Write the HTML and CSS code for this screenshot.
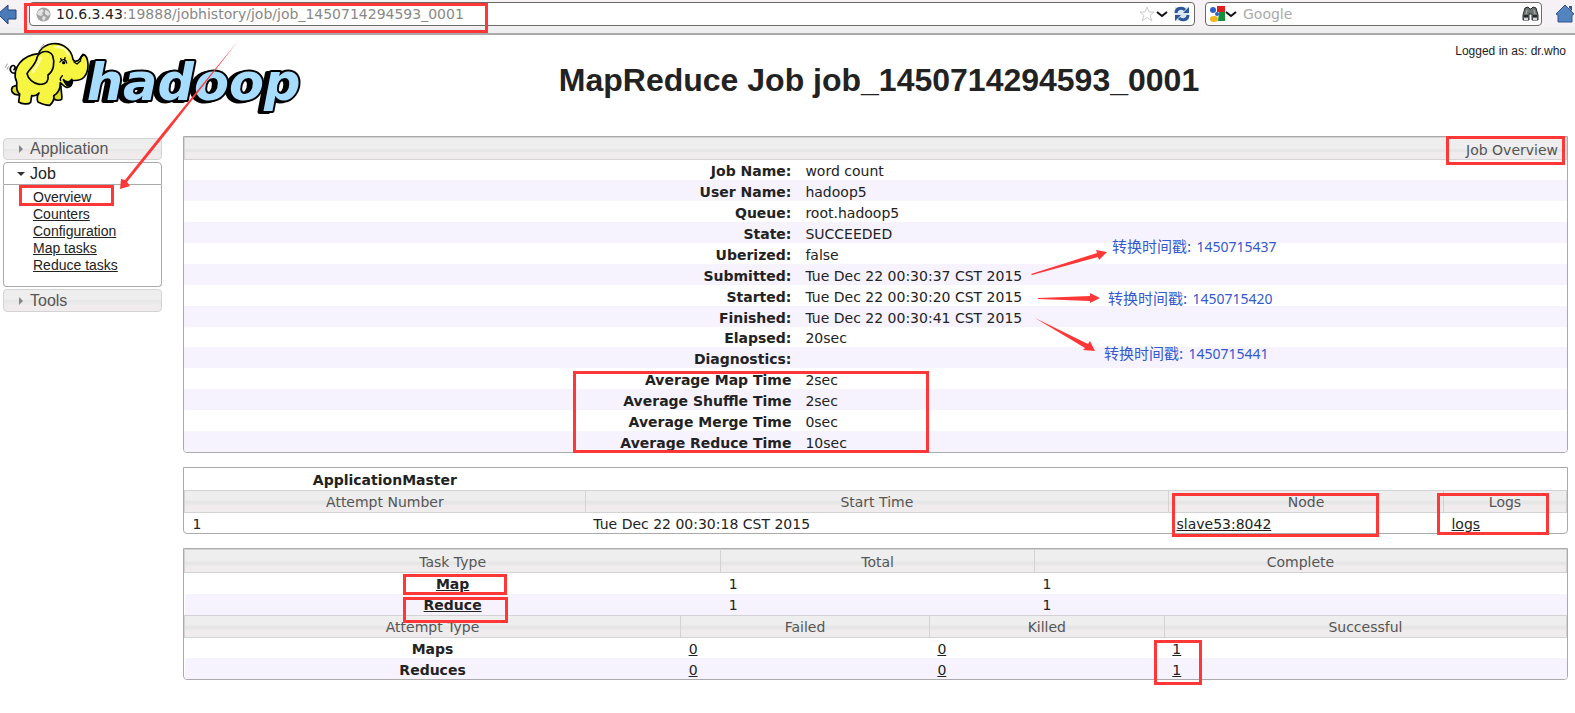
FILE: index.html
```html
<!DOCTYPE html>
<html lang="en">
<head>
  <meta charset="UTF-8">
  <meta name="viewport" content="width=device-width, initial-scale=1.0">
  <title>MapReduce Job job_1450714294593_0001</title>
  <link rel="stylesheet" href="styles.css">
</head>
<body>
  <div class="toolbar">
    <button class="tool back" aria-label="Back">
      <svg width="17" height="22" viewBox="0 0 17 22"><path d="M-2 11 L8 2 V7 H16 V16 H8 V21 Z" fill="#4a7ab8" stroke="#1f4478"/></svg>
    </button>
    <div class="field url">
      <svg width="15" height="15" viewBox="0 0 15 15"><circle cx="7.500" cy="7.500" r="7" fill="#a3a3a3"/><path d="M2 4 L6 2 L8 4 L6 6 L7 8 L4 9 L1 7 Z M9 3 L12 4 L14 7 L12 9 L9 7 Z M7 9 L10 10 L8 14 L6 12 Z" fill="#e3e3e3"/></svg>
      <label class="domain" for="url">10.6.3.43</label>
      <input id="url" type="text" value=":19888/jobhistory/job/job_1450714294593_0001">
      <button class="tool" aria-label="Bookmark">
        <svg width="16" height="16" viewBox="0 0 16 16"><path d="M8 1 L10 6 L15 6 L11 9.500 L13 15 L8 11.500 L3 15 L5 9.500 L1 6 L6 6 Z" fill="#fff" stroke="#ccc"/></svg>
      </button>
      <button class="tool history" aria-label="History">
        <svg width="12" height="8" viewBox="0 0 12 8"><path d="M1 2 L6 6 L11 2" fill="none" stroke="#111" stroke-width="2"/></svg>
      </button>
      <button class="tool reload" aria-label="Reload">
        <svg width="16" height="16" viewBox="0 0 16 16"><rect x="1" y="1" width="14" height="14" fill="#dbe6f4"/><path d="M2 7 C2 2 8 1 11 4 M14 9 C14 14 8 15 5 12" fill="none" stroke="#2c5698" stroke-width="3"/><path d="M15 1 V7 H9 Z M1 15 V9 H7 Z" fill="#2c5698"/></svg>
      </button>
    </div>
    <div class="field search">
      <svg width="16" height="16" viewBox="0 0 16 16"><path d="M8 0 H16 V6 H8 Z" fill="#e01f1f"/><path d="M10 6 H16 V15 H9 Z" fill="#16913a"/><circle cx="4" cy="4" r="3" fill="#2c62c8"/><circle cx="8" cy="8" r="2" fill="#2c62c8"/><ellipse cx="5" cy="13" rx="4" ry="3" fill="#f6b31b"/></svg>
      <button class="tool" aria-label="Search engine">
        <svg width="12" height="8" viewBox="0 0 12 8"><path d="M1 2 L6 6 L11 2" fill="none" stroke="#111" stroke-width="2"/></svg>
      </button>
      <input type="text" placeholder="Google" aria-label="Search">
      <button class="tool" aria-label="Find">
        <svg width="17" height="16" viewBox="0 0 17 16"><path d="M3 2 L6 1 L8 3 H9 L11 1 L14 2 L16 9 V14 H10 V8 H7 V14 H1 V9 Z" fill="#6d7573" stroke="#252b2a"/><path d="M2 10 H6 M11 10 H15" stroke="#252b2a" stroke-width="2"/><path d="M2 13 H6 M11 13 H15" stroke="#d5dad8" stroke-width="2"/><path d="M5 4 L4 8 M12 4 L13 8" stroke="#b5bbb9"/></svg>
      </button>
    </div>
    <button class="tool home" aria-label="Home">
      <svg width="20" height="20" viewBox="0 0 20 20"><path d="M1 10 L10 1 L19 10 L17 11 V18 H3 V11 Z" fill="#5484c0" stroke="#2b5590"/><path d="M14 2 H17 V7 L14 4 Z" fill="#2b5590"/></svg>
    </button>
  </div>

  <header class="header">
    <svg class="logo" width="310" height="80" viewBox="0 0 930 240" role="img" aria-label="hadoop">
      <text class="wordmark" x="260" y="187">hadoop</text>
      <!-- elephant -->
      <g fill="#f6f642" stroke="#000" stroke-width="5" stroke-linejoin="round" stroke-linecap="round">
        <path d="M50 104 C34 110 26 96 34 85 C42 78 50 88 42 95" fill="none"/>
        <path d="M164 150 L183 144 C182 160 188 174 185 184 C178 189 166 187 160 181 Z" fill="#dede20"/>
        <path d="M50 142 L38 146 C30 158 38 170 55 171 L66 168 Z" fill="#dede20"/>
        <path d="M120 38 C138 15 174 9 198 28 C212 38 217 52 219 64 C223 74 236 70 241 60 L249 49 C258 51 263 60 264 79 C265 112 248 131 217 127 C219 139 211 150 200 148 C190 146 187 137 181 134 C181 150 176 165 161 173 C164 185 156 196 149 202 C138 202 126 198 114 192 C109 180 112 172 117 165 C108 174 99 174 95 173 L92 193 C85 201 65 198 56 192 L59 168 C45 159 52 143 50 131 C40 111 47 89 59 75 C76 55 94 49 116 47 Z"/>
        <path d="M158 53 C147 34 122 38 112 56 C107 82 90 90 81 107 C84 122 100 137 118 139 C142 139 146 127 144 111 C160 100 166 75 158 53 Z"/>
        <path d="M190 125 C202 136 211 131 215 124 C215 138 211 145 203 143 C196 140 194 132 190 125 Z" fill="#000"/>
        <path d="M180 72 C188 60 199 65 200 75 M186 68 L182 62 M194 65 L195 59 M187 113 C181 119 179 124 182 128 M222 72 L231 78 L242 68 M252 50 C244 55 241 57 242 64" fill="none" stroke-width="4"/>
        <circle cx="191" cy="74" r="5" fill="#000" stroke="none"/>
        <path d="M16 88 L22 78 M22 93 L25 86 M122 30 L132 18 M127 33 L134 26" fill="none" stroke="#666" stroke-width="2"/>
        <path d="M166 28 C184 24 198 34 204 49 M122 60 C116 77 106 92 99 102" fill="none" stroke="#ffffb0" stroke-width="7"/>
      </g>
    </svg>
    <h1>MapReduce Job job_1450714294593_0001</h1>
    <div class="user">Logged in as: dr.who</div>
  </header>

  <div class="layout">
    <nav class="sidebar">
      <button class="nav-title">Application</button>
      <button class="nav-title open">Job</button>
      <ul class="nav-links">
        <li><a href="#">Overview</a></li>
        <li><a href="#">Counters</a></li>
        <li><a href="#">Configuration</a></li>
        <li><a href="#">Map tasks</a></li>
        <li><a href="#">Reduce tasks</a></li>
      </ul>
      <button class="nav-title">Tools</button>
    </nav>

    <main class="content">
      <section class="box info">
        <div class="bar">Job Overview</div>
        <table>
          <tr><th>Job Name:</th><td>word count</td></tr>
          <tr><th>User Name:</th><td>hadoop5</td></tr>
          <tr><th>Queue:</th><td>root.hadoop5</td></tr>
          <tr><th>State:</th><td>SUCCEEDED</td></tr>
          <tr><th>Uberized:</th><td>false</td></tr>
          <tr><th>Submitted:</th><td>Tue Dec 22 00:30:37 CST 2015</td></tr>
          <tr><th>Started:</th><td>Tue Dec 22 00:30:20 CST 2015</td></tr>
          <tr><th>Finished:</th><td>Tue Dec 22 00:30:41 CST 2015</td></tr>
          <tr><th>Elapsed:</th><td>20sec</td></tr>
          <tr><th>Diagnostics:</th><td></td></tr>
          <tr><th>Average Map Time</th><td>2sec</td></tr>
          <tr><th>Average Shuffle Time</th><td>2sec</td></tr>
          <tr><th>Average Merge Time</th><td>0sec</td></tr>
          <tr><th>Average Reduce Time</th><td>10sec</td></tr>
        </table>
      </section>

      <section class="box master">
        <table>
          <colgroup><col class="c-attempt"><col class="c-start"><col class="c-node"><col></colgroup>
          <tr><th>ApplicationMaster</th><td colspan="3"></td></tr>
          <tr class="head"><th>Attempt Number</th><th>Start Time</th><th>Node</th><th>Logs</th></tr>
          <tr><td>1</td><td>Tue Dec 22 00:30:18 CST 2015</td><td><a href="#">slave53:8042</a></td><td><a href="#">logs</a></td></tr>
        </table>
      </section>

      <section class="box tasks">
        <table>
          <colgroup><col class="c-task"><col class="c-total"><col></colgroup>
          <tr class="head"><th>Task Type</th><th>Total</th><th>Complete</th></tr>
          <tr><th><a href="#">Map</a></th><td>1</td><td>1</td></tr>
          <tr class="even"><th><a href="#">Reduce</a></th><td>1</td><td>1</td></tr>
        </table>
        <table>
          <colgroup><col class="c-type"><col class="c-failed"><col class="c-killed"><col></colgroup>
          <tr class="head"><th>Attempt Type</th><th>Failed</th><th>Killed</th><th>Successful</th></tr>
          <tr><th>Maps</th><td><a href="#">0</a></td><td><a href="#">0</a></td><td><a href="#">1</a></td></tr>
          <tr class="even"><th>Reduces</th><td><a href="#">0</a></td><td><a href="#">0</a></td><td><a href="#">1</a></td></tr>
        </table>
      </section>
    </main>
  </div>

  <!-- red marks and notes drawn over the page -->
  <svg class="marks" width="1575" height="713" viewBox="0 0 1575 713" aria-hidden="true">
    <g fill="none" stroke="#ff3737" stroke-width="3">
      <rect x="25.500" y="4.500" width="461" height="27"/>
      <rect x="20.500" y="186.500" width="92" height="18"/>
      <rect x="1447.500" y="137.500" width="116" height="26"/>
      <rect x="574.500" y="372.500" width="353" height="79"/>
      <rect x="1173.500" y="494.500" width="204" height="41"/>
      <rect x="1438.500" y="494.500" width="109" height="39"/>
      <rect x="404.500" y="575.500" width="101" height="18"/>
      <rect x="404.500" y="598.500" width="102" height="23"/>
      <rect x="1155.500" y="641.500" width="45" height="42"/>
    </g>
    <g fill="#ff3737">
      <path d="M238 41 L168 131 L127 182 L130 186 L120 189 L121 179 L125 180 L165 130 Z"/>
      <path d="M1031 274 L1097 253 L1096 250 L1107 252 L1099 260 L1098 257 L1032 275 Z"/>
      <path d="M1038 298 L1090 296 V293 L1100 298 L1090 303 V301 L1038 299 Z"/>
      <path d="M1035 318 L1088 344 L1090 341 L1095 351 L1083 350 L1085 348 Z"/>
    </g>
  </svg>
  <div class="note note-submitted">转换时间戳: <span>1450715437</span></div>
  <div class="note note-started">转换时间戳: <span>1450715420</span></div>
  <div class="note note-finished">转换时间戳: <span>1450715441</span></div>
</body>
</html>
```
FILE: styles.css
```css
body {
  margin: 0;
  position: relative;
  background: #fff;
  color: #222;
  font-family: "DejaVu Sans", Verdana, sans-serif;
  font-size: 14px;
  overflow-x: hidden;
}

a {
  color: #222;
}

button,
input {
  font-family: inherit;
  font-size: inherit;
}

/* browser toolbar */
.toolbar {
  display: flex;
  box-sizing: border-box;
  height: 35px;
  padding-top: 2px;
  background: linear-gradient(#f6f1f5 26px, #efefef 28px);
  border-bottom: 2px solid #a9a9a9;
}

.tool {
  display: flex;
  align-items: center;
  padding: 0;
  border: 0;
  background: none;
  cursor: pointer;
}

.back {
  width: 29px;
  height: 24px;
}

.field {
  display: flex;
  align-items: center;
  box-sizing: border-box;
  height: 24px;
  border: 1px solid #6b6b66;
  border-radius: 4px;
  background: #fff;
}

.field input {
  flex: 1;
  min-width: 0;
  padding: 0;
  border: 0;
  outline: 0;
  color: #888;
  background: none;
}

.field input::placeholder {
  color: #aaa;
}

.url {
  flex: 1;
  padding: 0 4px 0 6px;
}

.domain {
  padding-left: 5px;
}

.history {
  margin-left: 1px;
}

.reload {
  margin-left: 6px;
}

.search {
  width: 337px;
  margin-left: 10px;
  padding: 0 2px 0 3px;
}

.search input {
  padding-left: 6px;
}

.home {
  height: 24px;
  margin-left: 13px;
}

/* page header */
.header {
  display: grid;
  grid-template-columns: 183px 1fr;
  height: 101px;
  font-family: "Liberation Sans", Arial, sans-serif;
}

.logo {
  grid-area: 1 / 1;
  margin-top: 3px;
}

.wordmark {
  fill: #a5dcff;
  stroke: #000;
  stroke-width: 12px;
  stroke-linejoin: round;
  paint-order: stroke;
  font: italic bold 153px "DejaVu Sans", Verdana, sans-serif;
  filter: drop-shadow(-12px 3px 0 #000);
}

h1 {
  grid-area: 1 / 2;
  margin: 26px 0 0;
  font-size: 32px;
  line-height: 38px;
  text-align: center;
}

.user {
  grid-area: 1 / 2;
  place-self: start end;
  padding: 8px 9px 0 0;
  font-size: 12px;
  line-height: 16px;
}

.layout {
  display: flex;
  align-items: flex-start;
  gap: 21px;
  padding: 0 7px 0 3px;
}

/* sidebar */
.sidebar {
  width: 159px;
  padding-top: 2px;
  font-family: "Liberation Sans", Arial, sans-serif;
}

.nav-title {
  display: flex;
  align-items: center;
  box-sizing: border-box;
  width: 100%;
  height: 22px;
  padding: 0 0 0 10px;
  border: 1px solid #d3d3d3;
  border-radius: 4px;
  background: linear-gradient(#eee 50%, #e6e6e6 50%, #f0ecee 75%);
  color: #555;
  font-size: 16px;
}

.nav-title::before {
  content: "";
  width: 0;
  margin: 0 7px 0 5px;
  border: 4px solid transparent;
  border-left-color: #888;
  border-right-width: 0;
}

.nav-title.open {
  height: 23px;
  margin-top: 2px;
  border-color: #aaa;
  border-radius: 4px 4px 0 0;
  background: #fff;
  color: #222;
}

.nav-title.open::before {
  margin: 4px 5px 0 3px;
  border: 4px solid transparent;
  border-top-color: #333;
}

.nav-title:last-child {
  height: 23px;
}

.nav-links {
  margin: 0 0 2px;
  padding: 4px 0 12px 29px;
  border: 1px solid #aaa;
  border-top: 0;
  border-radius: 0 0 4px 4px;
  list-style: none;
  font-size: 14px;
  line-height: 17px;
}

/* tables */
.content {
  flex: 1;
  min-width: 0;
}

.box {
  margin-bottom: 14px;
  border: 1px solid #aaa;
  border-radius: 0 0 4px 4px;
  overflow: hidden;
}

.box table {
  width: 100%;
  border-collapse: collapse;
  table-layout: fixed;
}

.box th,
.box td {
  box-sizing: border-box;
  height: 21px;
  padding: 2px 8px 0;
  line-height: 18px;
  text-align: left;
}

.box .bar,
.box .head th {
  height: 22px;
  padding-top: 1px;
  border: 1px solid #d3d3d3;
  background: linear-gradient(#eee 50%, #e6e6e6 50%, #e6e6e6 65%, #f0ecee 70%);
  color: #555;
  font-weight: normal;
  line-height: 20px;
  text-align: center;
}

.box .bar {
  padding-right: 8px;
  height: 20px;
  line-height: 22px;
  text-align: right;
}

.info tr:nth-child(even),
.even {
  background: #f6f3ff;
}

.info tr:nth-child(8n + 1) > * {
  height: 20px;
}

.info th {
  width: 44.5%;
  text-align: right;
}

.info td {
  padding-left: 6px;
}

.master th,
.tasks th {
  text-align: center;
}

.master tr:first-child > * {
  height: 22px;
}

.tasks table:first-child .head th {
  height: 23px;
}

.c-attempt { width: 29%; }
.c-start { width: 42.2%; }
.c-node { width: 19.9%; }
.c-task { width: 38.8%; }
.c-total { width: 22.7%; }
.c-type { width: 35.9%; }
.c-failed { width: 18%; }
.c-killed { width: 17%; }

/* notes over the page */
.marks {
  position: absolute;
  top: 0;
  left: 0;
  pointer-events: none;
}

.note {
  position: absolute;
  color: #3558d0;
  font-family: "Noto Sans CJK SC", sans-serif;
  font-size: 15px;
  line-height: 20px;
  white-space: nowrap;
}

.note span {
  padding-left: 2px;
  font-family: "Noto Sans", sans-serif;
  font-size: 14px;
}

.note-submitted { top: 236px; left: 1112px; }
.note-started { top: 288px; left: 1108px; }
.note-finished { top: 343px; left: 1104px; }
```
